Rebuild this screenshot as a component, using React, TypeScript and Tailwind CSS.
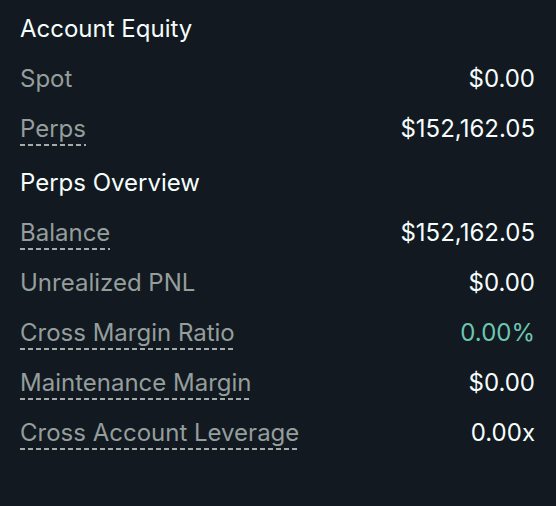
const rowsEquity = [
  { label: 'Spot', value: '$0.00', dashed: false },
  { label: 'Perps', value: '$152,162.05', dashed: true },
];

const rowsPerps = [
  { label: 'Balance', value: '$152,162.05', dashed: true },
  { label: 'Unrealized PNL', value: '$0.00', dashed: false },
  { label: 'Cross Margin Ratio', value: '0.00%', dashed: true, green: true },
  { label: 'Maintenance Margin', value: '$0.00', dashed: true },
  { label: 'Cross Account Leverage', value: '0.00x', dashed: true },
];

type Row = { label: string; value: string; dashed: boolean; green?: boolean };

function StatRow({ row }: { row: Row }) {
  return (
    <div className="flex h-[50px] items-center justify-between">
      <span
        className={
          row.dashed
            ? 'relative text-[#949e9c] after:absolute after:left-0 after:right-0 after:bottom-[-2px] after:h-[2px] after:bg-[linear-gradient(to_right,#a3acaa_62%,transparent_0)] after:bg-[length:8px_2px] after:bg-repeat-x after:content-[""]'
            : 'text-[#949e9c]'
        }
      >
        {row.label}
      </span>
      <span className={row.green ? 'text-[#6cc7b1]' : 'text-[#f6fefd]'}>{row.value}</span>
    </div>
  );
}

export default function App() {
  return (
    <div
      className="min-h-[506px] w-full bg-[#121920] px-5 pr-[21px] pt-[4px] text-[24px] leading-[30px] antialiased"
      style={{ fontFamily: 'Inter, "Noto Sans", sans-serif' }}
    >
      <div className="flex h-[50px] items-center text-[#f6fefd]">Account Equity</div>
      {rowsEquity.map((r) => (
        <StatRow key={r.label} row={r} />
      ))}
      <div className="mt-[4px] flex h-[50px] items-center text-[#f6fefd]">Perps Overview</div>
      {rowsPerps.map((r) => (
        <StatRow key={r.label} row={r} />
      ))}
    </div>
  );
}
